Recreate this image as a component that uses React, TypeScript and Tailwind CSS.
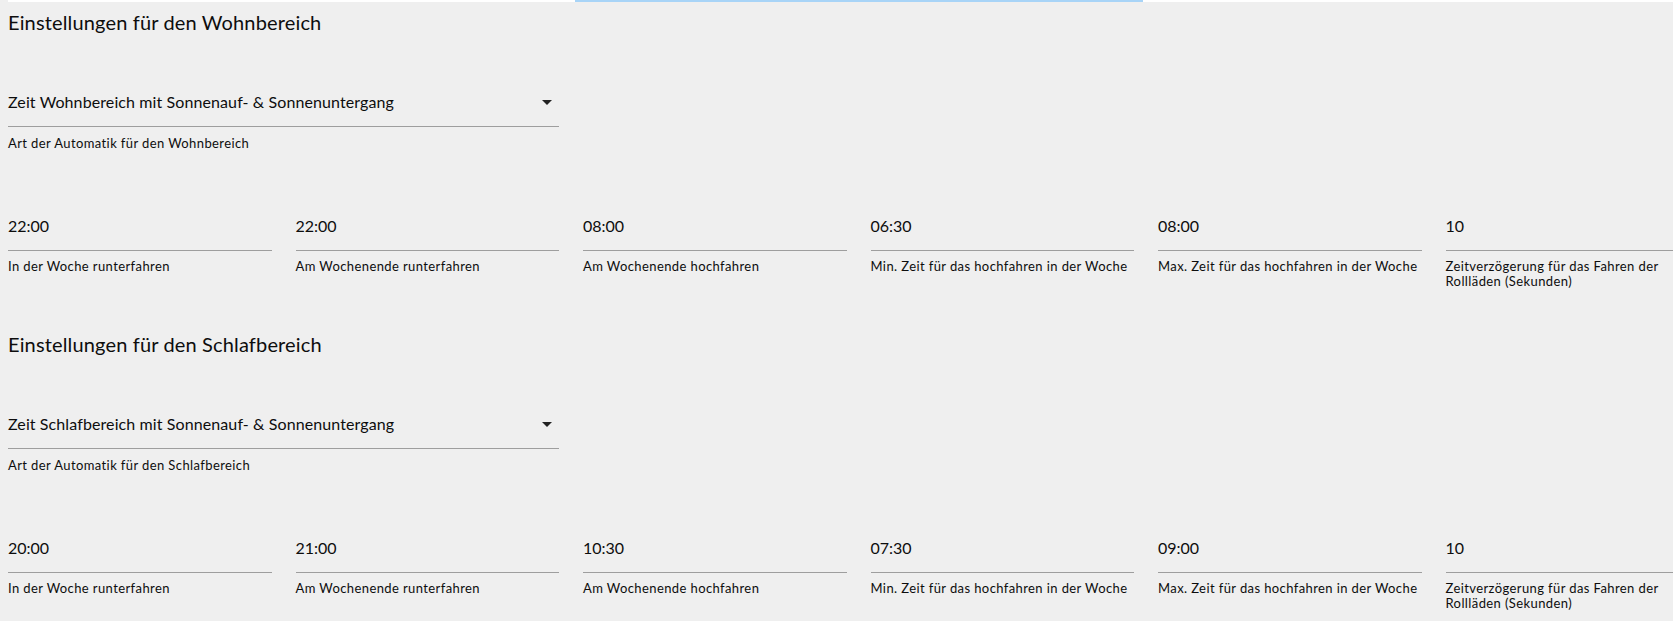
import React from 'react';

type Field = { value: string; label: string };

const sections: {
  title: string;
  mode: string;
  modeHint: string;
  fields: Field[];
}[] = [
  {
    title: 'Einstellungen für den Wohnbereich',
    mode: 'Zeit Wohnbereich mit Sonnenauf- & Sonnenuntergang',
    modeHint: 'Art der Automatik für den Wohnbereich',
    fields: [
      { value: '22:00', label: 'In der Woche runterfahren' },
      { value: '22:00', label: 'Am Wochenende runterfahren' },
      { value: '08:00', label: 'Am Wochenende hochfahren' },
      { value: '06:30', label: 'Min. Zeit für das hochfahren in der Woche' },
      { value: '08:00', label: 'Max. Zeit für das hochfahren in der Woche' },
      { value: '10', label: 'Zeitverzögerung für das Fahren der Rollläden (Sekunden)' },
    ],
  },
  {
    title: 'Einstellungen für den Schlafbereich',
    mode: 'Zeit Schlafbereich mit Sonnenauf- & Sonnenuntergang',
    modeHint: 'Art der Automatik für den Schlafbereich',
    fields: [
      { value: '20:00', label: 'In der Woche runterfahren' },
      { value: '21:00', label: 'Am Wochenende runterfahren' },
      { value: '10:30', label: 'Am Wochenende hochfahren' },
      { value: '07:30', label: 'Min. Zeit für das hochfahren in der Woche' },
      { value: '09:00', label: 'Max. Zeit für das hochfahren in der Woche' },
      { value: '10', label: 'Zeitverzögerung für das Fahren der Rollläden (Sekunden)' },
    ],
  },
];

function SelectField({ value, hint }: { value: string; hint: string }) {
  return (
    <div className="col-span-2">
      <div className="flex items-start justify-between border-b border-[#9e9e9e] pb-[14.5px]">
        <span className="text-[16px] leading-[20px] tracking-[0.1px]">{value}</span>
        <svg width="10" height="5" viewBox="0 0 10 5" className="mr-[7px] mt-[8.5px] fill-[#222]">
          <path d="M0 0h10L5 5z" />
        </svg>
      </div>
      <div className="mt-[7.7px] text-[13px] leading-[16px] tracking-[0.4px]">{hint}</div>
    </div>
  );
}

function TextField({ value, label }: Field) {
  return (
    <div>
      <div className="border-b border-[#9e9e9e] pb-[13.6px] text-[16px] leading-[20px]">{value}</div>
      <div className="mt-[8.3px] text-[13px] leading-[15px] tracking-[0.4px]">{label}</div>
    </div>
  );
}

export default function App() {
  return (
    <div
      className="h-[621px] w-full overflow-hidden bg-[#efefef] text-[#0d0d0d]"
      style={{ fontFamily: "'Segoe UI', Lato, 'Noto Sans', sans-serif" }}
    >
      <div className="ml-2 flex h-[2px] bg-white">
        <div className="w-[567px]" />
        <div className="w-[568px] bg-[#a8d4f7]" />
      </div>

      {sections.map((s) => (
        <section key={s.title} className="h-[322px] px-2 pt-[8.3px]">
          <h2 className="text-[20px] leading-[24px] font-normal tracking-[0.15px]">{s.title}</h2>
          <div className="mt-[57.5px] grid grid-cols-[repeat(6,263.5px)] gap-x-6">
            <SelectField value={s.mode} hint={s.modeHint} />
          </div>
          <div className="mt-[65px] grid grid-cols-[repeat(6,263.5px)] gap-x-6">
            {s.fields.map((f, i) => (
              <TextField key={i} {...f} />
            ))}
          </div>
        </section>
      ))}
    </div>
  );
}
